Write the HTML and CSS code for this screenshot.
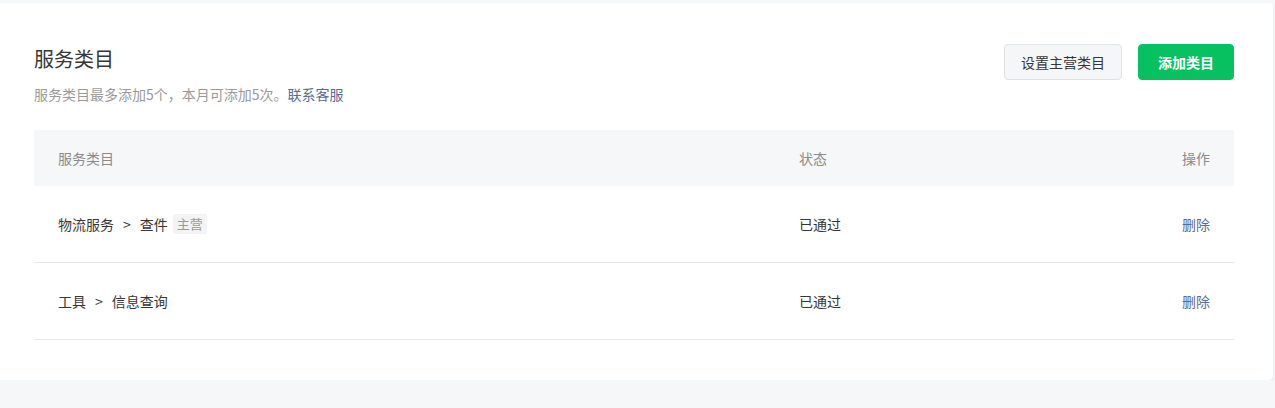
FILE: index.html
```html
<!DOCTYPE html>
<html lang="zh-CN">
<head>
<meta charset="utf-8">
<title>服务类目</title>
<link rel="stylesheet" href="styles.css">
</head>
<body>
<div class="card">
  <div class="head">
    <div class="head-text">
      <h2 class="title">服务类目</h2>
      <p class="desc">服务类目最多添加5个，本月可添加5次。<a class="link" href="#">联系客服</a></p>
    </div>
    <div class="actions">
      <button class="btn btn-default">设置主营类目</button>
      <button class="btn btn-primary">添加类目</button>
    </div>
  </div>
  <div class="table">
    <div class="tr th">
      <div class="c1">服务类目</div>
      <div class="c2">状态</div>
      <div class="c3">操作</div>
    </div>
    <div class="tr">
      <div class="c1">物流服务<span class="sep">&gt;</span>查件<span class="tag">主营</span></div>
      <div class="c2">已通过</div>
      <div class="c3"><a class="link" href="#">删除</a></div>
    </div>
    <div class="tr">
      <div class="c1">工具<span class="sep">&gt;</span>信息查询</div>
      <div class="c2">已通过</div>
      <div class="c3"><a class="link" href="#">删除</a></div>
    </div>
  </div>
</div>
</body>
</html>
```
FILE: styles.css
```css
html, body {
  margin: 0;
  padding: 0;
  background: #f6f7f9;
  font-family: "Noto Sans CJK SC", "Noto Sans", sans-serif;
  color: #353535;
}
.card {
  margin-top: 3px;
  width: 1273px;
  box-sizing: border-box;
  background: #fff;
  border-radius: 0 4px 4px 0;
  box-shadow: 0 1px 2px rgba(0, 0, 0, 0.12);
  padding: 41px 39px 40px 34px;
}
.head {
  display: flex;
  justify-content: space-between;
  align-items: flex-start;
}
.title {
  margin: 0;
  font-size: 20px;
  line-height: 30px;
  font-weight: normal;
  color: #353535;
}
.desc {
  margin: 9px 0 0;
  font-size: 14px;
  line-height: 22px;
  color: #9a9a9a;
}
.link {
  color: #576b95;
  text-decoration: none;
}
.actions {
  display: flex;
  gap: 16px;
}
.btn {
  height: 36px;
  box-sizing: border-box;
  border-radius: 4px;
  font-family: inherit;
  font-size: 14px;
  line-height: 20px;
  cursor: pointer;
}
.btn-default {
  padding: 0 16px;
  width: 118px;
  background: #f5f6f7;
  border: 1px solid #e1e2e4;
  color: #353535;
}
.btn-primary {
  width: 96px;
  padding: 0 18px;
  background: #07c160;
  border: 1px solid #07c160;
  color: #fff;
  font-weight: 600;
}
.table {
  margin-top: 25px;
  font-size: 14px;
}
.tr {
  display: grid;
  grid-template-columns: 765px 1fr 100px;
  align-items: center;
  height: 77px;
  box-sizing: border-box;
  border-bottom: 1px solid #e6e7e9;
}
.tr.th {
  height: 56px;
  background: #f6f7f9;
  border-bottom: none;
  color: #8a8a8a;
}
.c1 {
  padding-left: 24px;
  display: flex;
  align-items: center;
}
.c3 {
  text-align: right;
  padding-right: 24px;
}
.sep {
  margin: 0 9px;
}
.tag {
  margin-left: 5px;
  padding: 0 4px;
  height: 20px;
  line-height: 20px;
  font-size: 13px;
  background: #f3f3f3;
  color: #9a9a9a;
  border-radius: 2px;
}
```
